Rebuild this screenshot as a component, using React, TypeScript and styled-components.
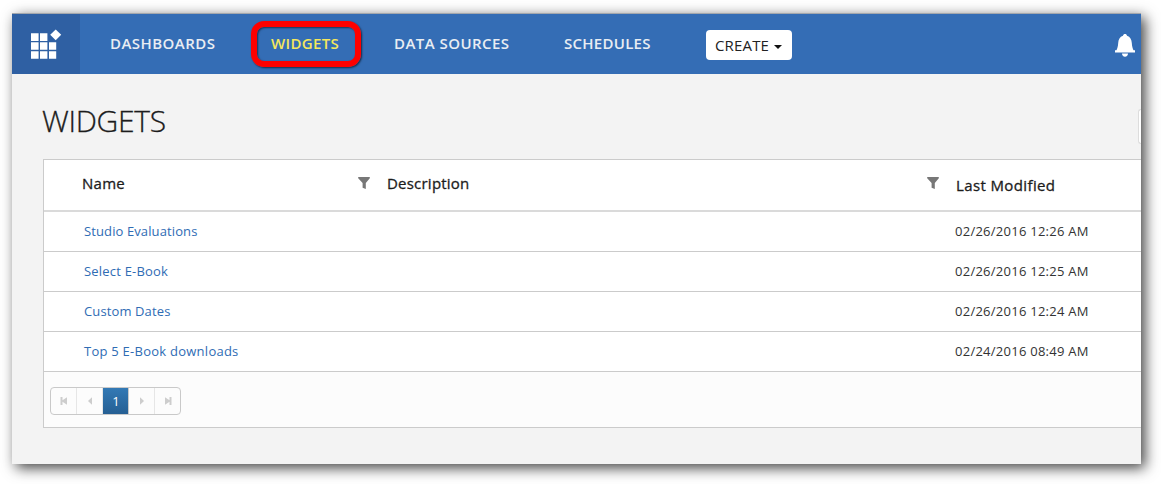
import React from "react";
import styled, { createGlobalStyle } from "styled-components";

const Global = createGlobalStyle`
  * { box-sizing: border-box; }
  body {
    margin: 0;
    height: 484px;
    overflow: hidden;
    background: #fff;
    font-family: "Open Sans", "Noto Sans", sans-serif;
    color: #1c1c1c;
  }
`;

const Page = styled.div`
  width: 1161px;
  height: 484px;
  padding: 13px 20px 20px 12px;
  overflow: hidden;
`;

const Window = styled.div`
  height: 451px;
  display: flex;
  flex-direction: column;
  overflow: hidden;
  background: #f3f3f3;
  border-top: 1px solid #a3a7ad;
  box-shadow: 4px 4px 13px rgba(0, 0, 0, 0.74);
`;

const Header = styled.header`
  height: 60px;
  flex: none;
  display: flex;
  background: #346db5;
`;

const LogoBox = styled.div`
  width: 68px;
  padding: 14px 0 0 18px;
  background: #2f60a3;
`;

const Nav = styled.nav`
  display: flex;
  flex: 1;
`;

const NavItem = styled.a<{ $left: number; $width: number; $spacing: number; $active?: boolean }>`
  position: relative;
  margin-left: ${(p) => p.$left}px;
  width: ${(p) => p.$width}px;
  line-height: 58px;
  font-size: 15px;
  font-weight: 600;
  white-space: nowrap;
  letter-spacing: ${(p) => p.$spacing}px;
  color: ${(p) => (p.$active ? "#f5e85c" : "#e9edf3")};
`;

const Highlight = styled.span`
  position: absolute;
  left: -20px;
  top: 7px;
  width: 110px;
  height: 46px;
  border: 6px solid #fe0000;
  border-radius: 13px;
  box-shadow: 1px 1px 2px rgba(0, 0, 0, 0.6), inset 1px 1px 2px rgba(0, 0, 0, 0.55);
`;

const CreateButton = styled.button`
  margin: 16px 0 0 55px;
  width: 86px;
  height: 30px;
  padding: 0 10px 0 9px;
  display: flex;
  align-items: center;
  justify-content: space-between;
  border: 0;
  border-radius: 4px;
  background: #fff;
  color: #222;
  font: 400 15px "Open Sans", sans-serif;
  letter-spacing: 0.15px;
`;

const Caret = styled.span`
  border: 4px solid transparent;
  border-top-color: #111;
  border-bottom: 0;
  margin-top: 3px;
`;

const Bell = styled.svg`
  margin: 20px 6px 0 0;
`;

const TitleRow = styled.div`
  height: 85px;
  flex: none;
  padding-left: 30px;
  display: flex;
  justify-content: space-between;
`;

const Title = styled.h1`
  margin: 0;
  padding-top: 27px;
  font-size: 30px;
  line-height: 40px;
  font-weight: 300;
  letter-spacing: -0.3px;
  -webkit-text-stroke: 0.3px #1c1c1c;
`;

const SearchEdge = styled.div`
  width: 3px;
  height: 35px;
  margin-top: 35px;
  background: #fff;
  border: 1px solid #ddd;
  border-right: 0;
  border-radius: 4px 0 0 4px;
`;

const Grid = styled.section`
  margin-left: 31px;
  height: 269px;
  border: 1px solid #cbcbcb;
  border-right: 0;
  background: #fff;
`;

const HeadRow = styled.div`
  height: 52px;
  display: flex;
  border-bottom: 2px solid #dadada;
`;

const HeadCell = styled.div<{ $width: number; $pad: number; $top?: number; $spacing?: number }>`
  width: ${(p) => p.$width}px;
  padding: ${(p) => p.$top ?? 0}px 13px 0 ${(p) => p.$pad}px;
  display: flex;
  justify-content: space-between;
  font-size: 15px;
  line-height: 46px;
  letter-spacing: ${(p) => p.$spacing ?? 0}px;
  -webkit-text-stroke: 0.3px #1c1c1c;
`;

const FilterIcon = styled.svg`
  margin-top: 17px;
`;

const Row = styled.div`
  height: 40px;
  display: flex;
  border-bottom: 1px solid #cbcbcb;
  line-height: 38px;
  font-size: 13px;
`;

const NameCell = styled.a<{ $spacing: number }>`
  width: 911px;
  padding-left: 40px;
  color: #2f6cb4;
  letter-spacing: ${(p) => p.$spacing}px;
`;

const DateCell = styled.span`
  color: #333;
  letter-spacing: 0.26px;
`;

const Footer = styled.div`
  height: 55px;
  padding: 15px 0 0 6px;
  background: #fcfcfc;
`;

const Pager = styled.div`
  width: 131px;
  height: 28px;
  display: flex;
  border: 1px solid #c9c9c9;
  border-radius: 4px;
`;

const PageButton = styled.div<{ $active?: boolean; $last?: boolean }>`
  width: ${(p) => (p.$last ? 25 : 26)}px;
  display: flex;
  align-items: center;
  justify-content: center;
  border-right: ${(p) => (p.$last ? 0 : 1)}px solid ${(p) => (p.$active ? "#c9c9c9" : "#e6e6e6")};
  background: ${(p) => (p.$active ? "linear-gradient(#3379b5, #265f93)" : "transparent")};
  background-clip: padding-box;
  color: #fff;
  font-size: 13px;
  padding-left: ${(p) => (p.$last ? 0 : 1)}px;
`;

const Funnel = () => (
  <FilterIcon width="12" height="12" viewBox="0 0 12 12" fill="#777">
    <path d="M.2 0h11.600v1.300L7.800 6v6L4.600 10.800V6L.2 1.300z" />
  </FilterIcon>
);

const Arrow = ({ flip, bar }: { flip?: boolean; bar?: boolean }) => (
  <svg width="8" height="8" viewBox="0 0 8 8" fill="#cdcdcd">
    <g transform={flip ? "matrix(-1 0 0 1 8 0)" : undefined}>
      {bar ? <path d="M.5 0h2v3.300L7 .2v7.600L2.500 4.700V8h-2z" /> : <path d="M2 4 6 .2v7.600z" />}
    </g>
  </svg>
);

const rows = [
  { name: "Studio Evaluations", date: "02/26/2016 12:26 AM", spacing: 0.11 },
  { name: "Select E-Book", date: "02/26/2016 12:25 AM", spacing: 0.2 },
  { name: "Custom Dates", date: "02/26/2016 12:24 AM", spacing: 0.12 },
  { name: "Top 5 E-Book downloads", date: "02/24/2016 08:49 AM", spacing: 0.25 },
];

export default function App() {
  return (
    <Page>
      <Global />
      <Window>
        <Header>
          <LogoBox>
            <svg width="34" height="32" viewBox="0 0 34 32" fill="#fff">
              <path d="M1 5.300h7.600v7.600H1zM10 5.300h7.400v7.600H10zM1 14.200h7.600v7.600H1zM10 14.200h7.400v7.600H10zM19 14.200h7.200v7.600H19zM1 23.200h7.600v7.600H1zM10 23.200h7.400v7.600H10zM19 23.200h7.200v7.600H19z" />
              <path d="M25.700 1.400 31.200 6.800l-5.500 5.400-5.500-5.400z" />
            </svg>
          </LogoBox>
          <Nav>
            <NavItem $left={30} $width={106} $spacing={0.45}>DASHBOARDS</NavItem>
            <NavItem $left={55} $width={69} $spacing={0.35} $active>
              WIDGETS
              <Highlight />
            </NavItem>
            <NavItem $left={54} $width={116} $spacing={0.45}>DATA SOURCES</NavItem>
            <NavItem $left={54} $width={87} $spacing={0.27}>SCHEDULES</NavItem>
            <CreateButton>
              CREATE
              <Caret />
            </CreateButton>
          </Nav>
          <Bell width="20" height="24" viewBox="0 0 20 24" fill="#fff">
            <path d="M10 0c1.100 0 1.800.7 2 1.700 3.200 1 4.600 3.800 4.800 7.300.2 3.600.9 5.600 1.800 7.300H20V18.500H0V16.300h1.400c.9-1.700 1.600-3.700 1.800-7.300C3.400 5.500 4.800 2.700 8 1.700 8.200.7 8.900 0 10 0zM7 19.500h6c0 1.800-1.200 3.200-3 3.200s-3-1.400-3-3.200z" />
          </Bell>
        </Header>
        <TitleRow>
          <Title>WIDGETS</Title>
          <SearchEdge />
        </TitleRow>
        <Grid>
          <HeadRow>
            <HeadCell $width={339} $pad={38} $spacing={0.25}>Name<Funnel /></HeadCell>
            <HeadCell $width={569} $pad={4} $spacing={0.22}>Description<Funnel /></HeadCell>
            <HeadCell $width={189} $pad={4} $top={2} $spacing={0.38}>Last Modified</HeadCell>
          </HeadRow>
          {rows.map((r) => (
            <Row key={r.name}>
              <NameCell $spacing={r.spacing}>{r.name}</NameCell>
              <DateCell>{r.date}</DateCell>
            </Row>
          ))}
          <Footer>
            <Pager>
              <PageButton><Arrow bar /></PageButton>
              <PageButton><Arrow /></PageButton>
              <PageButton $active>1</PageButton>
              <PageButton><Arrow flip /></PageButton>
              <PageButton $last><Arrow bar flip /></PageButton>
            </Pager>
          </Footer>
        </Grid>
      </Window>
    </Page>
  );
}
